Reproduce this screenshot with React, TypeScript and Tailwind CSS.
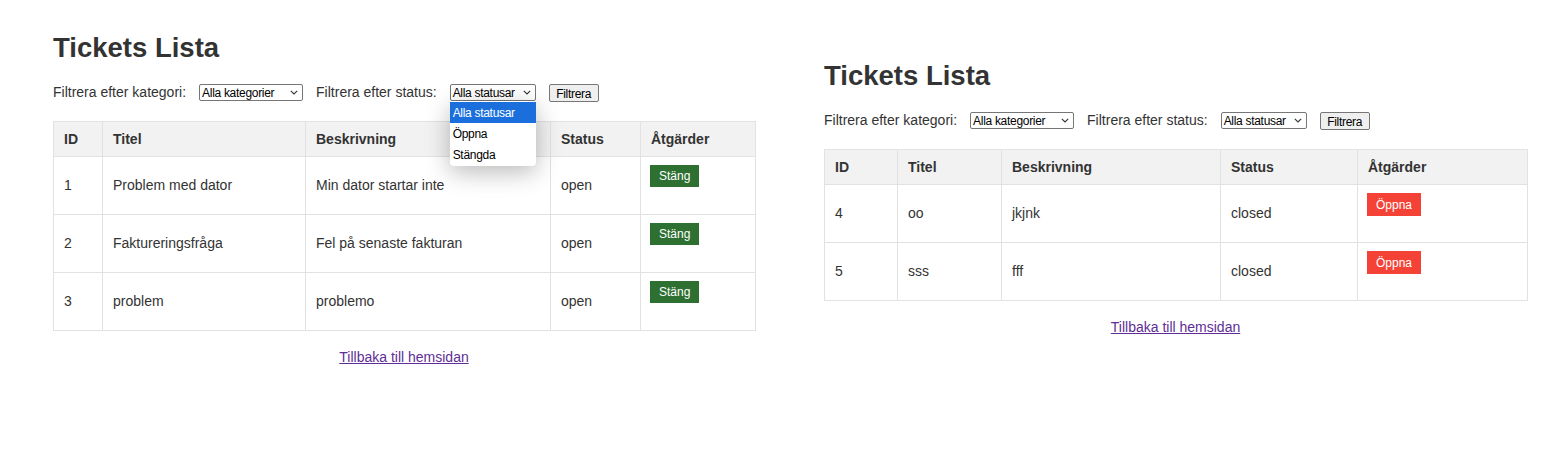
import React from "react";

type Ticket = {
  id: number;
  title: string;
  description: string;
  status: "open" | "closed";
};

const openTickets: Ticket[] = [
  { id: 1, title: "Problem med dator", description: "Min dator startar inte", status: "open" },
  { id: 2, title: "Faktureringsfråga", description: "Fel på senaste fakturan", status: "open" },
  { id: 3, title: "problem", description: "problemo", status: "open" },
];

const closedTickets: Ticket[] = [
  { id: 4, title: "oo", description: "jkjnk", status: "closed" },
  { id: 5, title: "sss", description: "fff", status: "closed" },
];

const font = "font-['Liberation_Sans',Arial,sans-serif]";

const Chevron = () => (
  <svg width="8" height="5" viewBox="0 0 8 5" className="shrink-0">
    <path d="M0.8 0.8 L4 4 L7.2 0.8" fill="none" stroke="#333" strokeWidth="1.1" />
  </svg>
);

const FakeSelect = ({ label, width, open }: { label: string; width: string; open?: boolean }) => (
  <div className="relative">
    <div
      className={`${width} h-[17px] flex items-center justify-between border border-[#767676] rounded-[2px] bg-white pl-[2px] pr-[4px] text-[12px] tracking-[-0.3px] text-black`}
    >
      <span>{label}</span>
      <Chevron />
    </div>
    {open && (
      <div className="absolute left-0 top-[17px] z-10 w-full rounded-[4px] bg-white py-[1px] text-[12px] tracking-[-0.3px] text-black shadow-[0_6px_24px_rgba(0,0,0,0.28)]">
        <div className="h-[21px] flex items-center px-[3px] bg-[#1a6fdc] text-white">Alla statusar</div>
        <div className="h-[21px] flex items-center px-[3px]">Öppna</div>
        <div className="h-[21px] flex items-center px-[3px]">Stängda</div>
      </div>
    )}
  </div>
);

const TicketPanel = ({
  tickets,
  cols,
  panelClass,
  dropdownOpen,
}: {
  tickets: Ticket[];
  cols: string[];
  panelClass: string;
  dropdownOpen?: boolean;
}) => (
  <div className={`${panelClass} text-[#333]`}>
    <h1 className="text-[27.5px] leading-[32px] font-bold">Tickets Lista</h1>

    <div className="mt-[18px] flex items-center gap-[13px] text-[14px]">
      <span>Filtrera efter kategori:</span>
      <FakeSelect label="Alla kategorier" width="w-[104px]" />
      <span>Filtrera efter status:</span>
      <FakeSelect label="Alla statusar" width="w-[86px]" open={dropdownOpen} />
      <button className="h-[18px] w-[50px] border border-[#767676] rounded-[2px] bg-[#efefef] text-[12px] tracking-[-0.3px] text-black">
        Filtrera
      </button>
    </div>

    <table className="mt-[18px] w-full table-fixed border-collapse text-[14px]">
      <colgroup>
        {cols.map((c) => (
          <col key={c} className={c} />
        ))}
      </colgroup>
      <thead>
        <tr className="h-[35px] bg-[#f2f2f2]">
          {["ID", "Titel", "Beskrivning", "Status", "Åtgärder"].map((h) => (
            <th key={h} className="border border-[#e2e2e2] px-[10px] text-left font-bold">
              {h}
            </th>
          ))}
        </tr>
      </thead>
      <tbody>
        {tickets.map((t) => (
          <tr key={t.id} className="h-[58px]">
            <td className="border border-[#e2e2e2] px-[10px]">{t.id}</td>
            <td className="border border-[#e2e2e2] px-[10px]">{t.title}</td>
            <td className="border border-[#e2e2e2] px-[10px]">{t.description}</td>
            <td className="border border-[#e2e2e2] px-[10px]">{t.status}</td>
            <td className="border border-[#e2e2e2] px-[9px] pt-[8px] align-top">
              {t.status === "open" ? (
                <button className="h-[22px] px-[9px] bg-[#2e6f32] text-white text-[12px]">Stäng</button>
              ) : (
                <button className="h-[23px] px-[9px] bg-[#f44336] text-white text-[12px]">Öppna</button>
              )}
            </td>
          </tr>
        ))}
      </tbody>
    </table>

    <div className="mt-[16px] text-center text-[14px]">
      <a href="#" className="text-[#5e2d96] underline">
        Tillbaka till hemsidan
      </a>
    </div>
  </div>
);

export default function App() {
  return (
    <div className={`${font} w-[1567px] h-[463px] bg-white flex items-start gap-[69px] pl-[53px]`}>
      <TicketPanel
        tickets={openTickets}
        cols={["w-[49px]", "w-[203px]", "w-[245px]", "w-[90px]", "w-[115px]"]}
        panelClass="w-[702px] pt-[32px]"
        dropdownOpen
      />
      <TicketPanel
        tickets={closedTickets}
        cols={["w-[73px]", "w-[104px]", "w-[219px]", "w-[137px]", "w-[170px]"]}
        panelClass="w-[703px] pt-[60px]"
      />
    </div>
  );
}
